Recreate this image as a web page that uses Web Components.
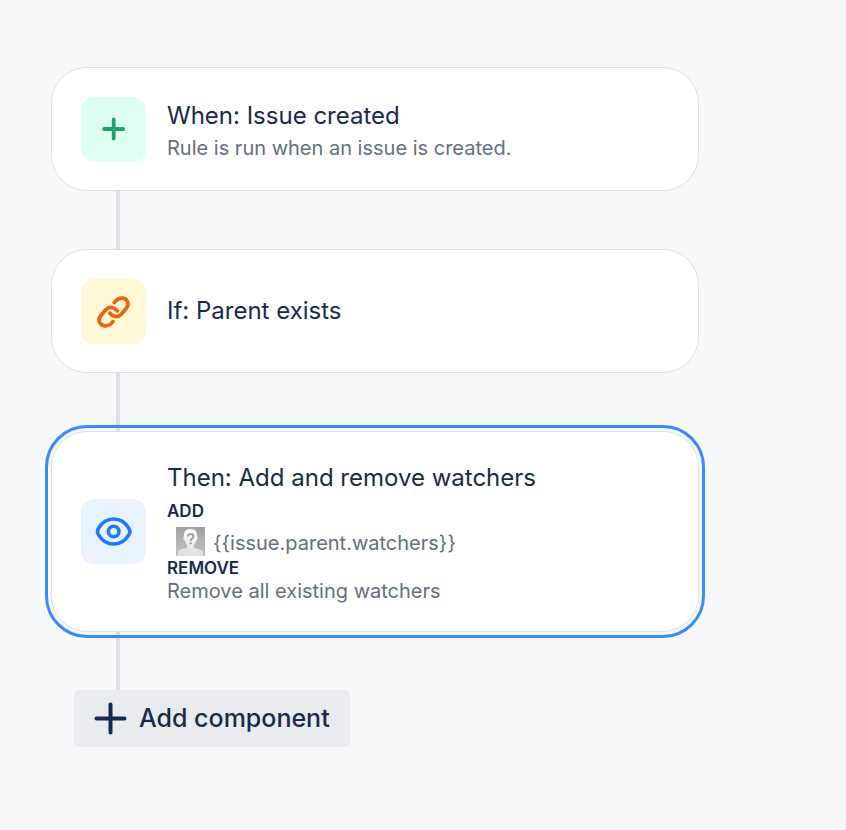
<!DOCTYPE html>
<html lang="en">
<head>
<meta charset="utf-8">
<meta name="viewport" content="width=device-width, initial-scale=1">
<title>Automation rule</title>
<style>
  body {
    margin: 0;
    background: #f7f8fa;
    color: #172b4d;
    font-family: Inter, "Liberation Sans", sans-serif;
  }
</style>
</head>
<body>
<rule-chain>
  <rule-card tone="green">
    <rule-icon slot="icon" name="plus"></rule-icon>
    <span slot="title">When: Issue created</span>
    <rule-text>Rule is run when an issue is created.</rule-text>
  </rule-card>
  <rule-connector></rule-connector>
  <rule-card tone="yellow">
    <rule-icon slot="icon" name="link"></rule-icon>
    <span slot="title">If: Parent exists</span>
  </rule-card>
  <rule-connector></rule-connector>
  <rule-card tone="blue" selected>
    <rule-icon slot="icon" name="eye"></rule-icon>
    <span slot="title">Then: Add and remove watchers</span>
    <rule-field label="Add"><user-chip>{{issue.parent.watchers}}</user-chip></rule-field>
    <rule-field label="Remove"><rule-text>Remove all existing watchers</rule-text></rule-field>
  </rule-card>
  <rule-connector></rule-connector>
  <add-button>Add component</add-button>
</rule-chain>

<script>
  function define(name, markup, setup) {
    const template = document.createElement('template');
    template.innerHTML = markup;
    customElements.define(name, class extends HTMLElement {
      constructor() {
        super();
        this.attachShadow({ mode: 'open' }).append(template.content.cloneNode(true));
      }
      connectedCallback() {
        if (setup) setup(this, this.shadowRoot);
      }
    });
  }

  const icons = {
    plus: '<path d="M32.700 22.500v19M23.200 32h19" stroke="#22a06b" stroke-width="3.800"/>',
    link: '<path d="M33.300 23.500C35.500 20.500 38.500 19 41.700 19.200 46.500 20 48.500 25 45.500 29L40.500 35C37 39 32 38 28.800 34.300M32 42.500C29.500 46 26.500 47 23.500 46.800 18.500 46 16.500 41 19.500 37L24.500 31C28 27 33 28 36.200 31.700" stroke="#e56910" stroke-width="3.800"/>',
    eye: '<path d="M32.700 20c-6.700 0-12 4-15.100 9.200a6 6 0 0 0 0 6.600c3.100 5.200 8.400 9.200 15.100 9.200s12-4 15.100-9.200a6 6 0 0 0 0-6.600c-3.100-5.200-8.400-9.200-15.100-9.200z" stroke="#1d7afc" stroke-width="3.600"/><circle cx="32.700" cy="32.500" r="5.300" stroke="#1d7afc" stroke-width="3.600"/>'
  };

  define('rule-chain', `
    <style>
      :host { display: block; padding: 67px 51px 40px; }
      main { display: flex; flex-direction: column; align-items: flex-start; max-width: 648px; }
    </style>
    <main><slot></slot></main>`);

  define('rule-card', `
    <style>
      :host { display: block; box-sizing: border-box; width: 100%; background: #fff;
        border: 1px solid #dcdfe4; border-radius: 36px; --tile: #e9f2ff; }
      :host([tone="green"]) { --tile: #dcfff1; }
      :host([tone="yellow"]) { --tile: #fff7d6; }
      :host([selected]) { outline: 3px solid #388bff; outline-offset: 3px; z-index: 1; }
      article { display: flex; align-items: center; gap: 21px; min-height: 66px; padding: 28px 29px; }
      .tile { flex: none; width: 65px; height: 65px; border-radius: 13px; background: var(--tile); }
      .body { min-width: 0; flex: 1; display: flex; flex-direction: column; }
      h2 { margin: 0; font-size: 24px; line-height: 36px; font-weight: 400; }
    </style>
    <article>
      <div class="tile"><slot name="icon"></slot></div>
      <div class="body"><h2><slot name="title"></slot></h2><div><slot></slot></div></div>
    </article>`);

  define('rule-icon', `
    <style>
      :host { display: block; }
      svg { display: block; width: 65px; height: 65px; fill: none; stroke-linecap: round; stroke-linejoin: round; }
    </style>
    <svg viewBox="0 0 65 65" aria-hidden="true"></svg>`,
    (host, root) => { root.querySelector('svg').innerHTML = icons[host.getAttribute('name')]; });

  define('rule-text', `
    <style>:host { display: block; color: #626f86; font-size: 20px; line-height: 23px; padding-top: 3px; }
      :host-context(rule-field) { padding-top: 0; }</style>
    <slot></slot>`);

  define('rule-field', `
    <style>
      :host { display: block; }
      h3 { margin: 0; padding-top: 3px; font-size: 17px; line-height: 24px; font-weight: 600; text-transform: uppercase; }
      :host(:not(:first-of-type)) h3 { padding-top: 0; }
    </style>
    <h3></h3><slot></slot>`,
    (host, root) => { root.querySelector('h3').textContent = host.getAttribute('label'); });

  define('user-chip', `
    <style>
      :host { display: flex; align-items: center; gap: 8px; padding: 4px 0 0 9px;
        color: #626f86; font-size: 20px; line-height: 29px; }
      svg { flex: none; display: block; width: 29px; height: 29px; }
      span { padding-top: 3px; line-height: 26px; }
    </style>
    <svg viewBox="0 0 29 29" fill="none" aria-hidden="true">
      <defs>
        <linearGradient id="back" x2="0" y2="1"><stop stop-color="#a2a2a2"/><stop offset="1" stop-color="#c2c2c2"/></linearGradient>
        <linearGradient id="person" x2="0" y2="1"><stop stop-color="#fff"/><stop offset="1" stop-color="#dedede"/></linearGradient>
      </defs>
      <path fill="url(#back)" d="M0 0h29v29H0z"/>
      <path fill="url(#person)" d="M14.500 2C9.500 2 7.500 5 8 9.500c-1.200.3-.6 3.500.8 4 .5 2.300 1.500 3.800 2.500 4.800v2.200C8 22 3.500 22 2.300 25L1.500 29h26l-.8-4c-1.200-3-5.700-3-9-4.500v-2.200c1-1 2-2.500 2.500-4.800 1.400-.5 2-3.700.8-4C21.500 5 19.500 2 14.500 2z"/>
      <path stroke="#a0a0a0" stroke-width="2" d="M11.800 9.500c0-3.500 5.600-3.300 5.600 0 0 2.200-2.700 2-2.700 4.500M14.700 15.300v1.900"/>
    </svg>
    <span><slot></slot></span>`);

  define('rule-connector', `
    <style>:host { display: block; width: 4px; height: 58px; margin-left: 65px; background: #dddfe5; }</style>`);

  define('add-button', `
    <style>
      :host { display: block; margin-left: 23px; }
      button { display: flex; align-items: center; gap: 12px; padding: 12px 20px; border: 0;
        border-radius: 5px; background: #e9ebee; color: inherit; font-family: inherit;
        font-size: 25px; line-height: 33px; font-weight: 500; cursor: pointer; }
      svg { flex: none; display: block; width: 33px; height: 33px; }
    </style>
    <button type="button">
      <svg viewBox="0 0 33 33" fill="none" stroke="#172b4d" stroke-width="4" stroke-linecap="round" aria-hidden="true"><path d="M16.500 2.500v28M2.500 16.500h28"/></svg>
      <span><slot></slot></span>
    </button>`);
</script>
</body>
</html>
